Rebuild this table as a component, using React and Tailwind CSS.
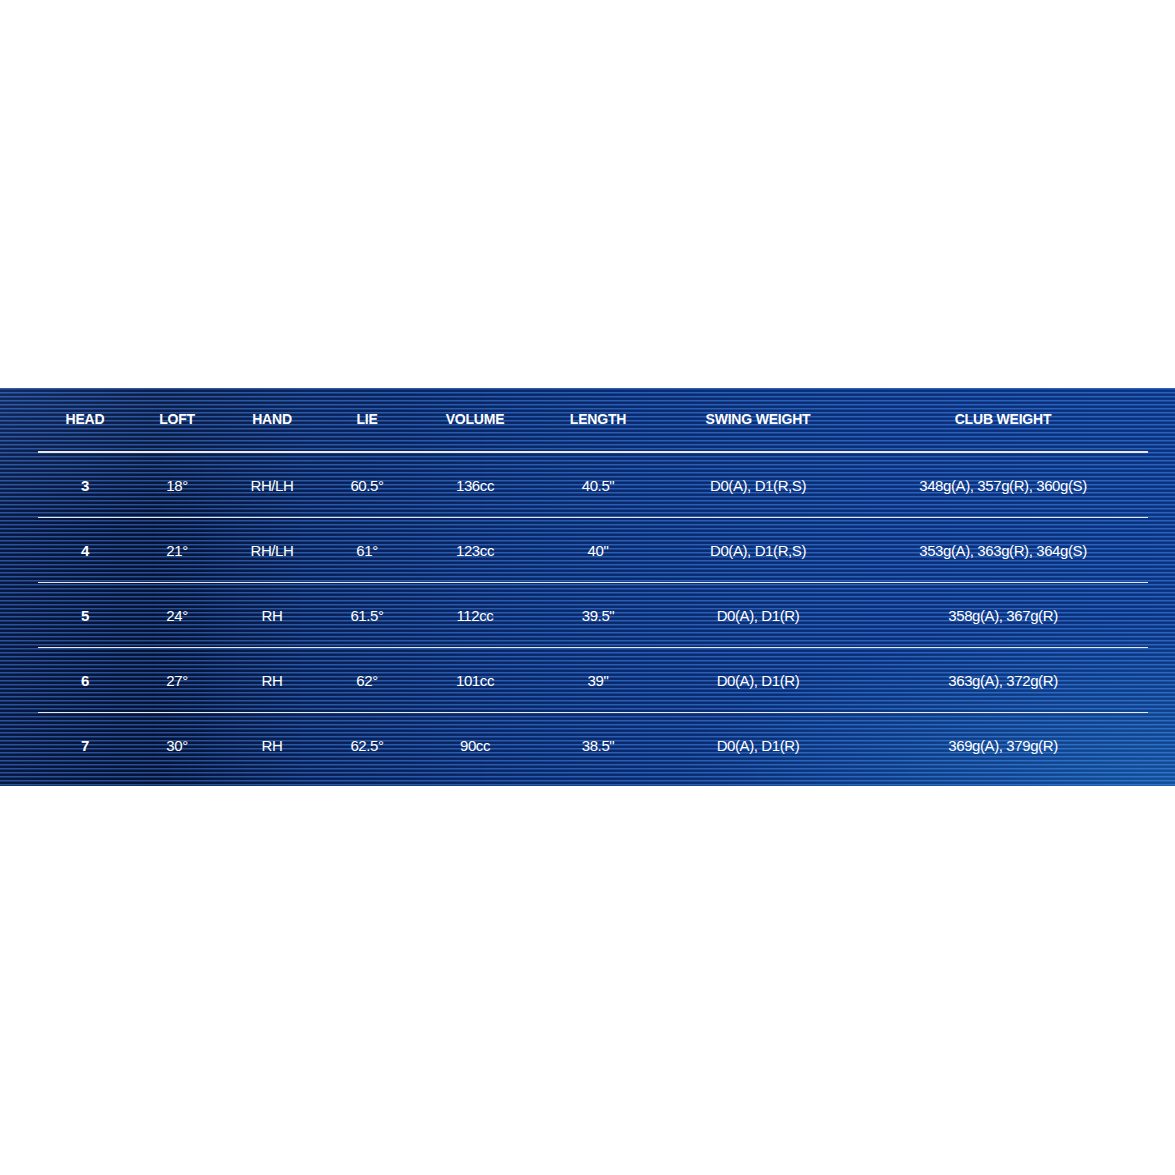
import React from "react";

const cols = ["HEAD", "LOFT", "HAND", "LIE", "VOLUME", "LENGTH", "SWING WEIGHT", "CLUB WEIGHT"];

const rows = [
  ["3", "18°", "RH/LH", "60.5°", "136cc", "40.5\"", "D0(A), D1(R,S)", "348g(A), 357g(R), 360g(S)"],
  ["4", "21°", "RH/LH", "61°", "123cc", "40\"", "D0(A), D1(R,S)", "353g(A), 363g(R), 364g(S)"],
  ["5", "24°", "RH", "61.5°", "112cc", "39.5\"", "D0(A), D1(R)", "358g(A), 367g(R)"],
  ["6", "27°", "RH", "62°", "101cc", "39\"", "D0(A), D1(R)", "363g(A), 372g(R)"],
  ["7", "30°", "RH", "62.5°", "90cc", "38.5\"", "D0(A), D1(R)", "369g(A), 379g(R)"],
];

// column widths picked so each column centre sits where the original's does
const grid = "grid w-[1110px] grid-cols-[94px_90px_100px_90px_126px_120px_200px_290px] text-center";

export default function App() {
  return (
    <div className="w-[1175px] h-[1175px] bg-white pt-[388px] font-['Liberation_Sans',Arial,sans-serif]">
      <div className="h-[398px] pl-[38px] pb-[8px] text-white bg-[repeating-linear-gradient(180deg,rgba(70,140,235,0.5)_0px,rgba(70,140,235,0.5)_1px,rgba(0,0,0,0.15)_2px,rgba(0,0,0,0.15)_3px,transparent_4px),radial-gradient(ellipse_at_100%_100%,rgba(40,150,220,0.35),transparent_30%),radial-gradient(ellipse_at_0%_0%,rgba(40,80,160,0.35),transparent_25%),linear-gradient(90deg,#0a1b4a_0%,#06133a_13%,#0a2460_26%,#0b2d76_45%,#0c3486_70%,#0d3990_100%)]">
        <div className={`${grid} h-[65px] items-center border-b-2 border-[#e6e8ee] text-[14px] font-bold tracking-[-0.2px]`}>
          {cols.map((c) => (
            <div key={c} className="pb-[1px]">{c}</div>
          ))}
        </div>
        {rows.map((r, i) => (
          <div
            key={r[0]}
            className={`${grid} h-[65px] items-center text-[15px] tracking-[-0.4px] ${i < rows.length - 1 ? "border-b border-[#e6e8ee]" : ""}`}
          >
            {r.map((v, j) => (
              <div key={j} className={j === 0 ? "font-bold pt-[2px]" : "pt-[2px]"}>
                {v}
              </div>
            ))}
          </div>
        ))}
      </div>
    </div>
  );
}
